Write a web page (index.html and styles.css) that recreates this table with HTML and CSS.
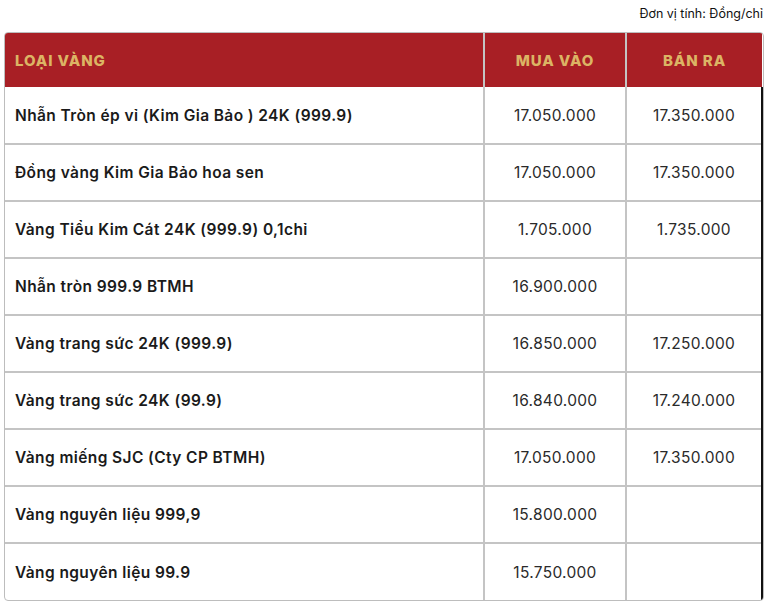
FILE: index.html
```html
<!DOCTYPE html>
<html lang="vi">
<head>
<meta charset="utf-8">
<link rel="stylesheet" href="styles.css">
</head>
<body>
<div class="page">
  <div class="unit">Đơn vị tính: Đồng/chỉ</div>
  <div class="wrap">
    <table class="prices">
      <thead>
        <tr><th class="c-name">LOẠI VÀNG</th><th class="c-buy">MUA VÀO</th><th class="c-sell">BÁN RA</th></tr>
      </thead>
      <tbody>
        <tr><td class="c-name">Nhẫn Tròn ép vỉ (Kim Gia Bảo ) 24K (999.9)</td><td class="c-buy">17.050.000</td><td class="c-sell">17.350.000</td></tr>
        <tr><td class="c-name">Đồng vàng Kim Gia Bảo hoa sen</td><td class="c-buy">17.050.000</td><td class="c-sell">17.350.000</td></tr>
        <tr><td class="c-name">Vàng Tiểu Kim Cát 24K (999.9) 0,1chỉ</td><td class="c-buy">1.705.000</td><td class="c-sell">1.735.000</td></tr>
        <tr><td class="c-name">Nhẫn tròn 999.9 BTMH</td><td class="c-buy">16.900.000</td><td class="c-sell"></td></tr>
        <tr><td class="c-name">Vàng trang sức 24K (999.9)</td><td class="c-buy">16.850.000</td><td class="c-sell">17.250.000</td></tr>
        <tr><td class="c-name">Vàng trang sức 24K (99.9)</td><td class="c-buy">16.840.000</td><td class="c-sell">17.240.000</td></tr>
        <tr><td class="c-name">Vàng miếng SJC (Cty CP BTMH)</td><td class="c-buy">17.050.000</td><td class="c-sell">17.350.000</td></tr>
        <tr><td class="c-name">Vàng nguyên liệu 999,9</td><td class="c-buy">15.800.000</td><td class="c-sell"></td></tr>
        <tr><td class="c-name">Vàng nguyên liệu 99.9</td><td class="c-buy">15.750.000</td><td class="c-sell"></td></tr>
      </tbody>
    </table>
  </div>
</div>
</body>
</html>
```

FILE: styles.css
```css
* { box-sizing: border-box; }
html, body { margin: 0; padding: 0; background: #fff; }
body { font-family: Inter, "Noto Sans", sans-serif; color: #1a1a1a; }
.page { padding: 4px 13px 0 4px; }
.unit {
  text-align: right;
  font-size: 12.5px;
  line-height: 20px;
  color: #111;
  height: 28px;
  padding-right: 1px;
}
.wrap {
  border: 1px solid #bdbdbd;
  border-radius: 4px;
  overflow: hidden;
  width: 760px;
}
.prices {
  width: 100%;
  border-collapse: collapse;
  table-layout: fixed;
}
.prices th {
  background: #a81f25;
  color: #dcb464;
  font-weight: 800;
  font-size: 15px;
  letter-spacing: 0.9px;
  height: 54px;
  padding: 0;
  border-left: 2px solid #c4c4c4;
}
.prices th.c-name { text-align: left; padding-left: 10px; border-left: 0; }
.c-name { width: 479px; }
.c-buy { width: 142px; }
.prices td {
  height: 57px;
  padding: 0;
  font-size: 15.5px;
  letter-spacing: 0.3px;
  border-top: 2px solid #c4c4c4;
  border-left: 2px solid #c4c4c4;
  text-align: center;
  color: #2a2a2a;
}
.prices tbody tr:first-child td { border-top: 0; }
.prices td.c-name {
  text-align: left;
  padding-left: 10px;
  font-weight: 600;
  letter-spacing: 0.4px;
  border-left: 0;
  color: #1a1a1a;
}
.prices td.c-sell { border-right: 2px solid #111; }
```
